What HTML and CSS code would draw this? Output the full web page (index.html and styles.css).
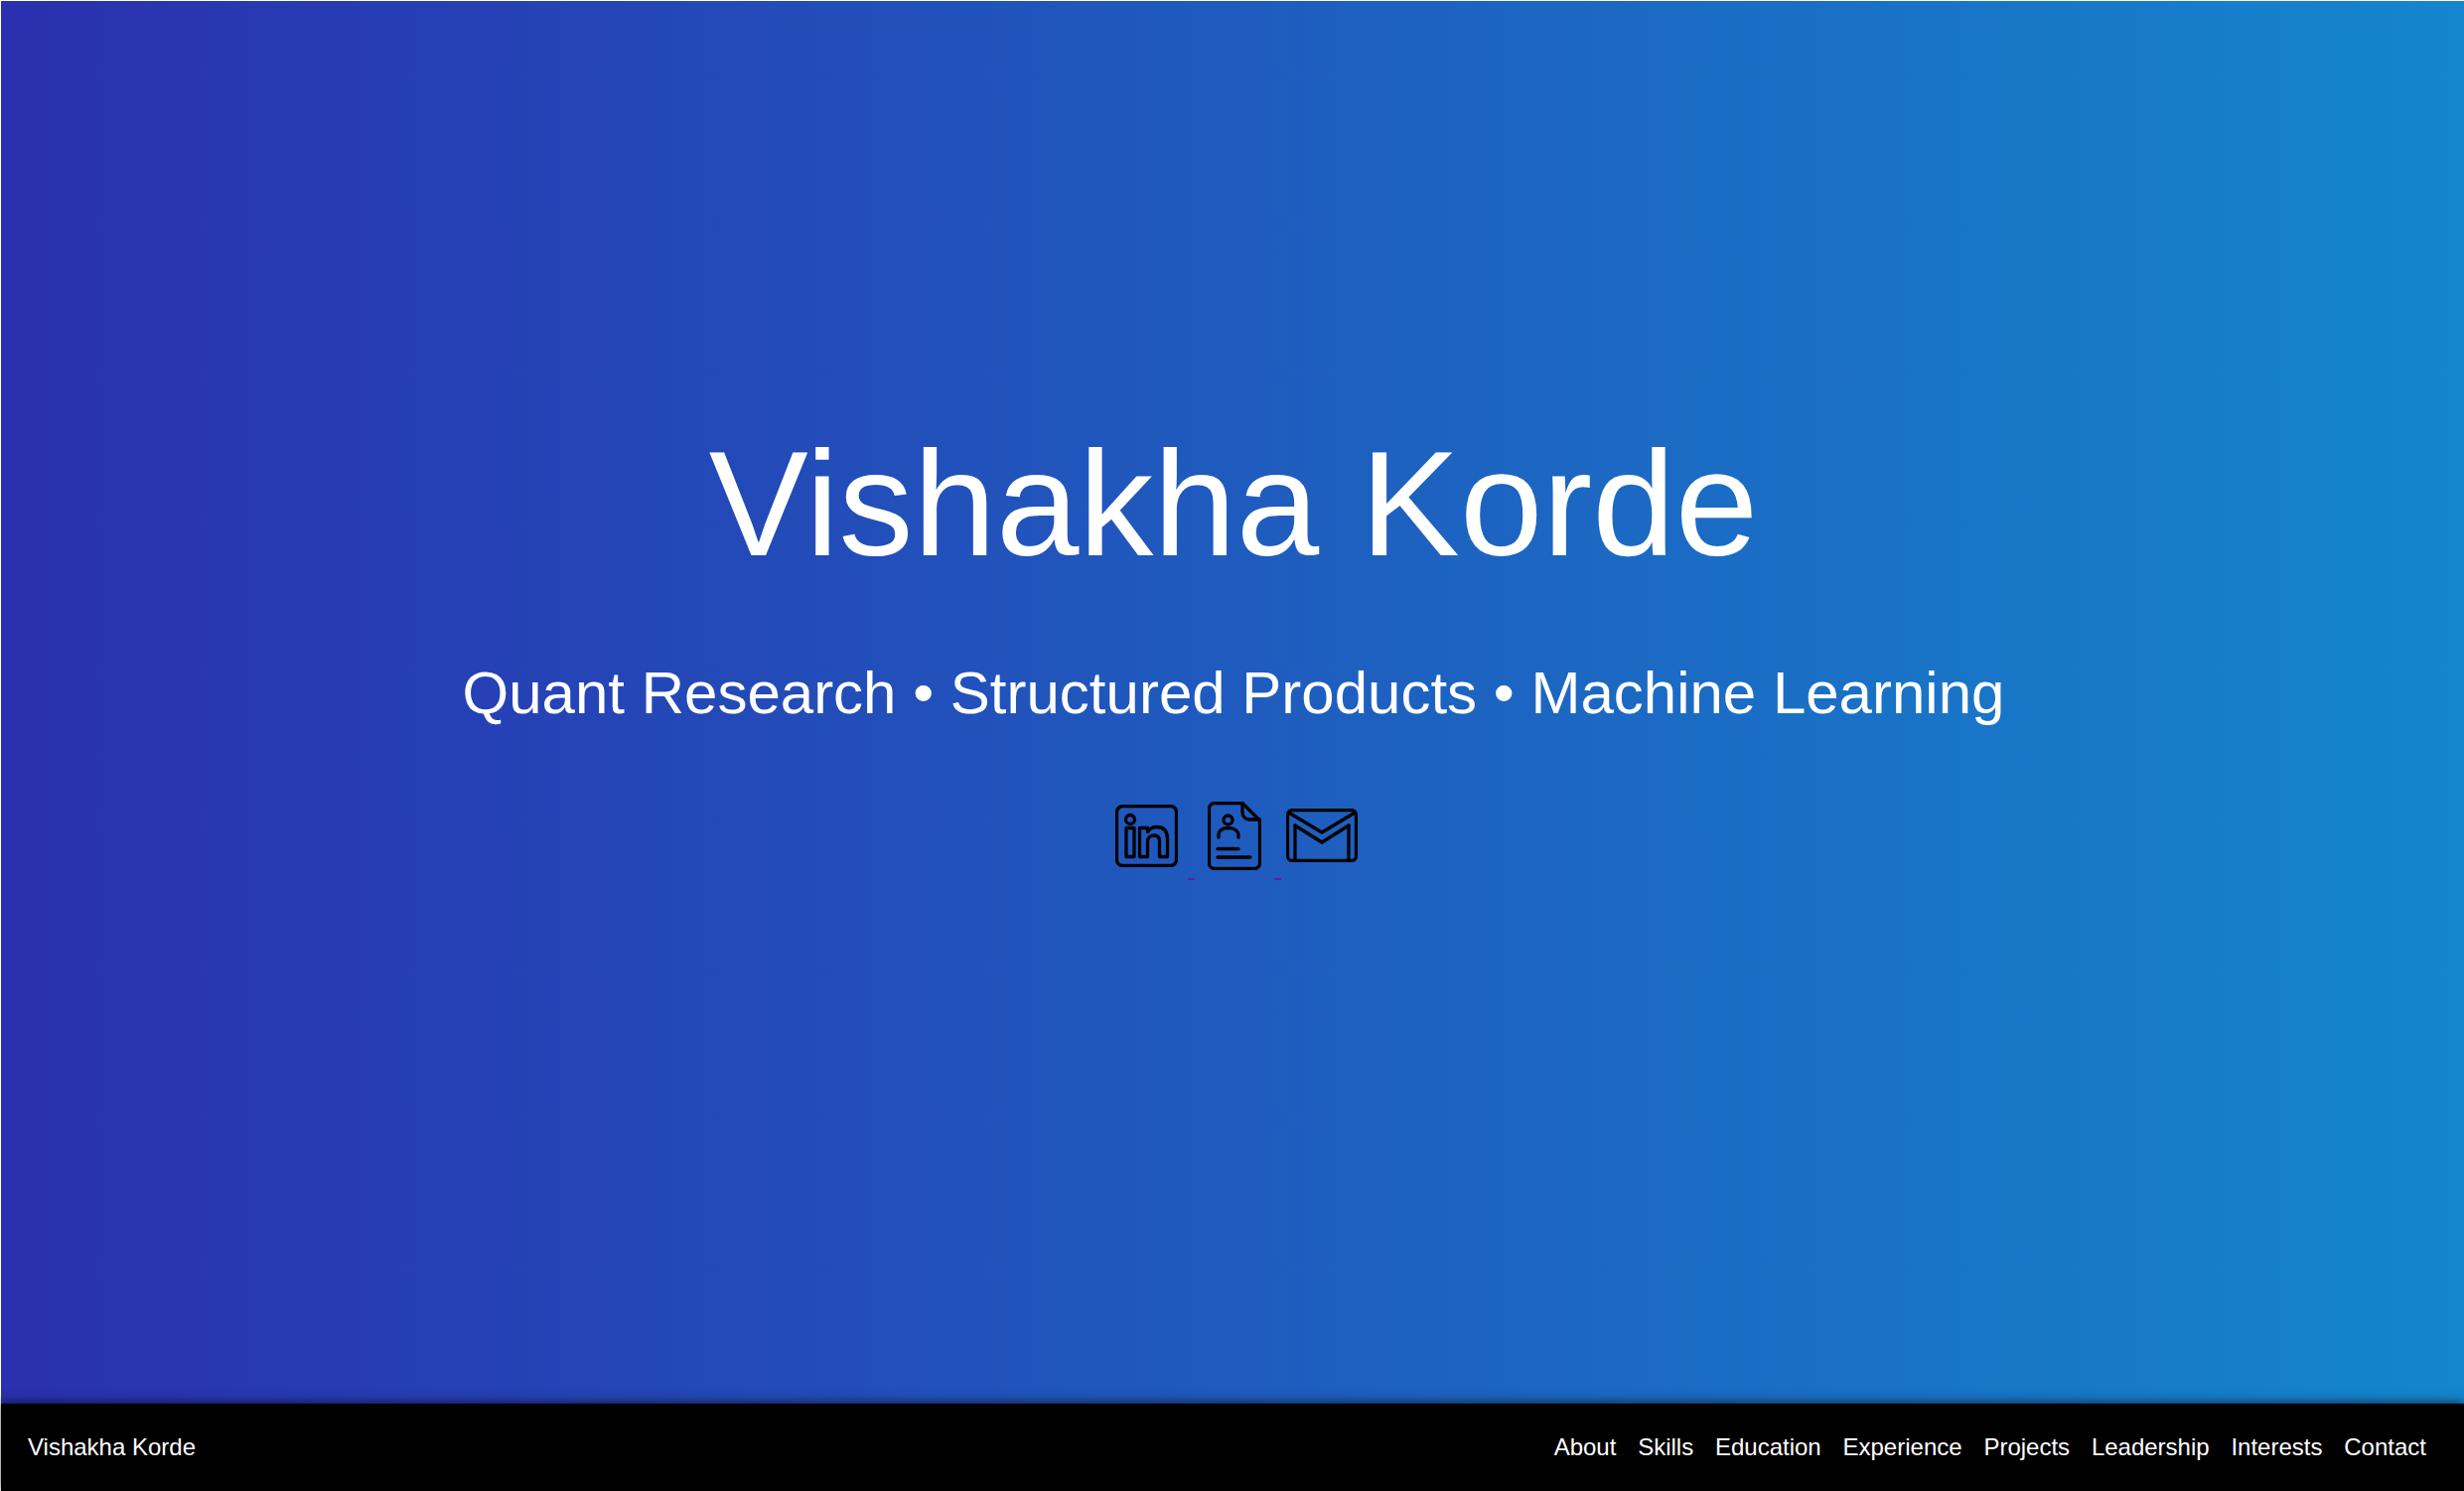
FILE: index.html
```html
<!DOCTYPE html>
<html lang="en">
<head>
  <meta charset="UTF-8">
  <title>Vishakha Korde</title>
  <link rel="stylesheet" href="styles.css">
</head>
<body>
  <section class="hero">
    <h1>Vishakha Korde</h1>
    <p class="tagline">Quant Research • Structured Products • Machine Learning</p>
    <div class="links">
      <a href="#linkedin" class="icon-link">
        <svg class="icon linkedin" viewBox="0 0 63 63" fill="none" stroke="#000" stroke-width="3.300" stroke-linejoin="round">
          <rect x="1.500" y="1.500" width="60" height="60" rx="6"/>
          <circle cx="15" cy="15" r="4.500"/>
          <rect x="11" y="23.500" width="8" height="29"/>
          <path d="M24.500 23.500h8v4c2-3 5-5 9-5 7 0 11 4 11 12v18h-8V37c0-4-1.500-6-5-6-4 0-7 2-7 6v15.500h-8z"/>
        </svg>
        <span class="gap"></span>
      </a>
      <a href="#resume" class="icon-link">
        <svg class="icon resume" viewBox="0 0 54 69" fill="none" stroke="#000" stroke-width="3.300" stroke-linecap="round" stroke-linejoin="round">
          <path d="M35 1.500H7A5.500 5.500 0 0 0 1.500 7v55A5.500 5.500 0 0 0 7 67.500h40a5.500 5.500 0 0 0 5.500-5.500V19z"/>
          <path d="M35 1.500V11a7 7 0 0 0 7 7h10.500"/>
          <circle cx="20.500" cy="18.500" r="4.500"/>
          <path d="M11 36v-2c0-5 4-7.500 9.500-7.500S31 29 31 34v2"/>
          <path d="M10 47.500h21M10 56h33"/>
        </svg>
        <span class="gap wide"></span>
      </a>
      <a href="#mail" class="icon-link">
        <svg class="icon mail" viewBox="0 0 72 54" fill="none" stroke="#000" stroke-width="3.300" stroke-linecap="round" stroke-linejoin="round">
          <rect x="1.500" y="1.500" width="69" height="51" rx="5"/>
          <path d="M3.500 4.500L36 24 68.500 4.500M9 17l27 17 27-17"/>
          <path d="M9 17v35M63 17v35"/>
        </svg>
      </a>
    </div>
  </section>
  <nav class="navbar">
    <a href="#top" class="brand">Vishakha Korde</a>
    <ul class="menu">
      <li><a href="#about">About</a></li>
      <li><a href="#skills">Skills</a></li>
      <li><a href="#education">Education</a></li>
      <li><a href="#experience">Experience</a></li>
      <li><a href="#projects">Projects</a></li>
      <li><a href="#leadership">Leadership</a></li>
      <li><a href="#interests">Interests</a></li>
      <li><a href="#contact">Contact</a></li>
    </ul>
  </nav>
</body>
</html>
```

FILE: styles.css
```css
html, body { height: 100%; }
body { margin: 0; padding: 1px 0 0 1px; box-sizing: border-box; display: flex; flex-direction: column; overflow: hidden; background: #fff; font-family: "Liberation Sans", Arial, sans-serif; color: #fff; }
.hero { flex: 1; display: flex; flex-direction: column; align-items: center; background: linear-gradient(90deg, #2a30af, #1486cd); padding: 420px 0 0 2px; }
h1 { margin: 0; font-size: 150px; font-weight: 400; line-height: 172px; }
.tagline { margin: 70px 0 0; font-size: 60px; line-height: 69px; }
.links { display: flex; align-items: flex-start; margin-top: 75px; padding-left: 5px; }
.icon-link { display: flex; text-decoration: none; }
.icon { display: block; }
.linkedin { width: 63px; height: 63px; margin-top: 3px; }
.resume { width: 54px; height: 69px; }
.mail { width: 72px; height: 54px; margin-top: 7px; }
.gap { width: 7px; height: 2px; margin: 77px 13px 0 10px; background: #6a1b9a; }
.gap.wide { margin: 77px 5px 0 13px; }
.navbar { height: 88px; flex-shrink: 0; display: flex; align-items: center; justify-content: space-between; padding: 0 38px 0 27px; background: #000; box-shadow: 0 -1px 10px rgba(0, 0, 0, .65); position: relative; }
.navbar a { color: #fff; text-decoration: none; font-size: 24px; }
.menu { display: flex; gap: 21.800px; margin: 0; padding: 0; list-style: none; }
```
